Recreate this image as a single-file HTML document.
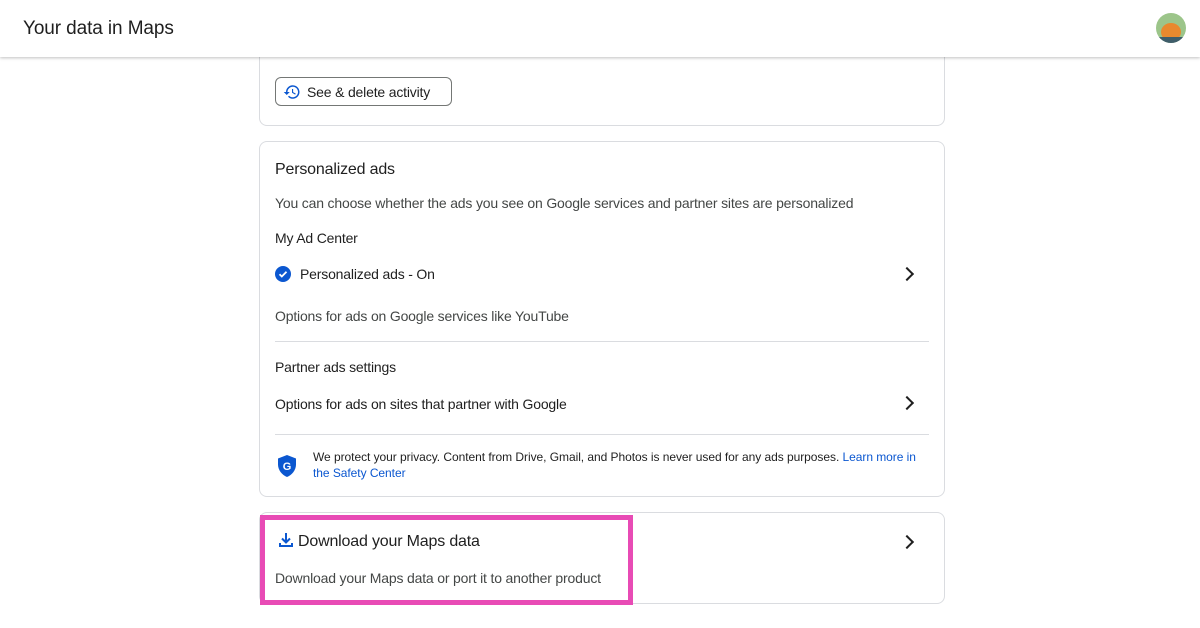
<!DOCTYPE html>
<html><head><style>
*{box-sizing:border-box;margin:0;padding:0}
body{width:1200px;height:628px;background:#fff;font-family:"Liberation Sans",Arial,sans-serif;color:#1f1f1f;position:relative;overflow:hidden}
.hdr{position:absolute;left:0;top:0;width:1200px;height:57px;background:#fff;box-shadow:0 1px 3px rgba(0,0,0,.25);z-index:2}
.hdr .t{position:absolute;left:23px;top:18px;font-size:19px;color:#1f1f1f;letter-spacing:-0.1px}
.card{position:absolute;left:259px;width:686px;border:1px solid #dadce0;border-radius:8px;background:#fff}
.a{position:absolute;font-size:14px;color:#444746;letter-spacing:-0.18px}
.chev{position:absolute;width:10px;height:10px;border-right:2px solid #1f1f1f;border-top:2px solid #1f1f1f;transform:rotate(45deg)}
</style></head><body>
<div class="hdr"><div class="t">Your data in Maps</div>
<div style="position:absolute;left:1156px;top:13px;width:30px;height:30px;border-radius:50%;background:#9cc58a;overflow:hidden"><div style="position:absolute;left:5px;top:10px;width:20px;height:18px;border-radius:50%;background:#e8892e"></div><div style="position:absolute;left:0;top:24px;width:30px;height:6px;background:#3f5d6a"></div></div></div>

<div class="card" style="top:40px;height:86px">
<div style="position:absolute;left:15px;top:36px;width:177px;height:29px;border:1px solid #747775;border-radius:6px">
<svg style="position:absolute;left:7px;top:5px" width="18" height="18" viewBox="0 0 24 24"><path d="M13 3a9 9 0 0 0-9 9H1l4 4 4-4H6a7 7 0 1 1 2.05 4.95l-1.42 1.42A9 9 0 1 0 13 3zm-1 5v5l4.25 2.52.77-1.28-3.52-2.09V8z" fill="#0b57d0"/></svg>
<span style="position:absolute;left:31px;top:6px;font-size:14px;color:#1f1f1f;letter-spacing:-0.18px">See &amp; delete activity</span></div>
</div>

<div class="card" style="top:141px;height:356px">
<div class="a" style="left:15px;top:19px;font-size:16px;color:#1f1f1f">Personalized ads</div>
<div class="a" style="left:15px;top:53px">You can choose whether the ads you see on Google services and partner sites are personalized</div>
<div class="a" style="left:15px;top:88px;color:#1f1f1f">My Ad Center</div>
<svg style="position:absolute;left:15px;top:124px" width="16" height="16" viewBox="0 0 16 16"><circle cx="8" cy="8" r="8" fill="#0b57d0"/><path d="M4.5 8.2l2.3 2.3 4.7-4.7" stroke="#fff" stroke-width="1.8" fill="none"/></svg>
<div class="a" style="left:40px;top:124px;color:#1f1f1f">Personalized ads - On</div>
<div class="chev" style="left:642px;top:127px"></div>
<div class="a" style="left:15px;top:166px">Options for ads on Google services like YouTube</div>
<div style="position:absolute;left:15px;top:199px;width:654px;border-top:1px solid #dadce0"></div>
<div class="a" style="left:15px;top:217px;color:#1f1f1f">Partner ads settings</div>
<div class="a" style="left:15px;top:254px;color:#1f1f1f">Options for ads on sites that partner with Google</div>
<div class="chev" style="left:642px;top:256px"></div>
<div style="position:absolute;left:15px;top:292px;width:654px;border-top:1px solid #dadce0"></div>
<svg style="position:absolute;left:17px;top:313px" width="20" height="22" viewBox="0 0 20 22"><path d="M10 0L1 3.5v6C1 15 5 20 10 22c5-2 9-7 9-12.5v-6z" fill="#0b57d0"/><text x="10" y="15" font-size="11" font-weight="bold" fill="#fff" text-anchor="middle" font-family="Liberation Sans">G</text></svg>
<div class="a" style="left:53px;top:308px;width:620px;font-size:12px;line-height:15.5px;color:#1f1f1f;letter-spacing:-0.05px">We protect your privacy. Content from Drive, Gmail, and Photos is never used for any ads purposes. <span style="color:#0b57d0">Learn more in the Safety Center</span></div>
</div>

<div class="card" style="top:512px;height:92px">
<svg style="position:absolute;left:18px;top:19px" width="16" height="16" viewBox="0 0 16 16"><path d="M8 1v9M4 6.5l4 4 4-4M2 11v3h12v-3" stroke="#0b57d0" stroke-width="2" fill="none"/></svg>
<div class="a" style="left:38px;top:20px;font-size:16px;color:#1f1f1f">Download your Maps data</div>
<div class="a" style="left:15px;top:57px">Download your Maps data or port it to another product</div>
<div class="chev" style="left:642px;top:24px"></div>
</div>
<div style="position:absolute;left:260px;top:515px;width:373px;height:90px;border:5px solid #e84bb5"></div>
</body></html>
